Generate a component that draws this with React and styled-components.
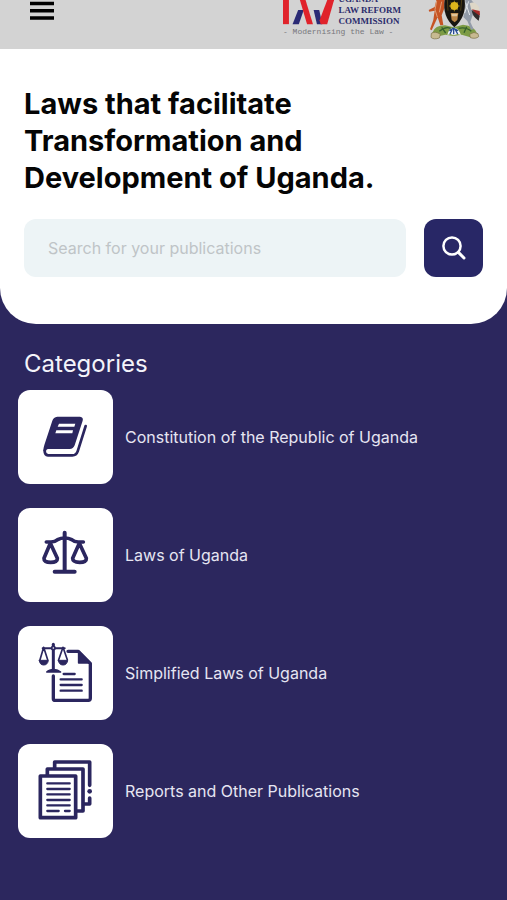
import React, { useState } from 'react'
import styled, { createGlobalStyle } from 'styled-components'

const GlobalStyle = createGlobalStyle`
    body {
        margin: 0;
        background: #2c275e;
        font-family: Inter, 'Liberation Sans', sans-serif;
    }
`

const Page = styled.div`
    min-height: 100vh;
    background: #2c275e;
`

const TopBar = styled.header`
    height: 49px;
    box-sizing: border-box;
    padding: 0px 27px 0px 30px;
    display: flex;
    align-items: flex-start;
    justify-content: space-between;
    overflow: hidden;
    background: #d3d3d3;
`

const MenuButton = styled.button`
    padding: 0;
    border: none;
    background: none;
    display: flex;
    cursor: pointer;
`

const Brands = styled.div`
    display: flex;
    align-items: flex-start;
    gap: 27px;
`

const Logo = styled.a`
    width: 118px;
    height: 36px;
    display: flex;
    flex-direction: column;
    justify-content: flex-end;
    color: #2b2c6c;
    text-decoration: none;
`

const LogoTop = styled.span`
    display: flex;
    align-items: flex-start;
    gap: 4px;
`

const LogoName = styled.span`
    font-family: 'Liberation Serif', serif;
    font-weight: bold;
    font-size: 9px;
    line-height: 11px;
    white-space: nowrap;
`

const Tagline = styled.span`
    font-family: 'Liberation Mono', monospace;
    font-size: 8px;
    line-height: 9px;
    color: #77777c;
    white-space: nowrap;
`

const SearchPanel = styled.section`
    padding: 36px 24px 47px 24px;
    background: #ffffff;
    border-radius: 0px 0px 36px 36px;
`

const Heading = styled.h1`
    margin: 0px 0px 23px 0px;
    max-width: 400px;
    font-weight: 700;
    font-size: 29px;
    line-height: 37px;
    color: #050505;
`

const SearchForm = styled.form`
    display: flex;
    gap: 18px;
`

const SearchInput = styled.input`
    flex: 1;
    min-width: 0;
    height: 58px;
    box-sizing: border-box;
    padding: 0px 24px;
    border: none;
    border-radius: 12px;
    background: #edf4f6;
    font-family: inherit;
    font-size: 16px;
    color: #222222;
    &::placeholder {
        color: #bfc4c7;
        opacity: 1;
    }
`

const SearchButton = styled.button`
    width: 59px;
    height: 58px;
    padding: 0;
    display: flex;
    align-items: center;
    justify-content: center;
    border: none;
    border-radius: 12px;
    background: #282766;
    cursor: pointer;
`

const Categories = styled.section`
    padding: 24px 18px 60px 18px;
`

const CategoriesTitle = styled.h2`
    margin: 0px 0px 10px 6px;
    font-weight: 400;
    font-size: 24px;
    line-height: 32px;
    color: #f4f4fa;
`

const CategoryList = styled.ul`
    margin: 0;
    padding: 0;
    list-style: none;
    display: flex;
    flex-direction: column;
    gap: 24px;
`

const CategoryLink = styled.a`
    display: flex;
    align-items: center;
    gap: 12px;
    color: #e6e5f2;
    font-size: 16px;
    line-height: 24px;
    text-decoration: none;
`

const IconCard = styled.span`
    flex: none;
    width: 95px;
    height: 94px;
    display: flex;
    border-radius: 12px;
    background: #ffffff;
`

const ink = '#2b265f'

function MenuIcon() {
    return (
        <svg width="24" height="20" viewBox="0 0 24 20" aria-hidden="true">
            <path d="M0 3.5h24M0 10.7h24M0 18h24" stroke="#000" strokeWidth="3.4" />
        </svg>
    )
}

function LogoMark() {
    return (
        <svg width="52" height="31" viewBox="38 -18 156 93" aria-hidden="true">
            <path d="M38-18h18v91H38z" fill="#e0232b" />
            <path d="M84 30h17L86 73H67z" fill="#2a2a75" />
            <path d="M84-18h17l28 91h-18z" fill="#e0232b" />
            <path d="M131 30h17l9 43h-16z" fill="#2a2a75" />
            <path d="M179-18h19l-26 91h-20l-3-12z" fill="#e0232b" />
        </svg>
    )
}

function CoatOfArms() {
    return (
        <svg width="52" height="40" viewBox="38 0 156 120" aria-hidden="true">
            <path d="M51 98q8-22 38-22l26 6 28-8q35 4 42 26l-12 14-34-10-24 4-25-4-34 8z" fill="#7d9c45" />
            <path d="M72 94q18-16 34-9M130 85q22-5 38 9M79 82l12 17M154 80l-8 18" fill="none" stroke="#35612c" strokeWidth="4" />
            <path d="M96 105q5-22 19-22t22 22l-10-3-12 4-10-4z" fill="#eef1f7" />
            <path d="M104 102l6-13M115 103V87M127 102l-7-13M102 92l12-7 14 7" fill="none" stroke="#264b94" strokeWidth="4" />
            <path d="M48 100q12-8 27 3l-3 11q-17 6-25-2zM163 103q13-10 25-2l2 9q-9 8-25 3z" fill="#c7ba91" stroke="#796e43" strokeWidth="2" />
            <path d="M63 0h25l-2 28-7 18 5 29-9 1-8-24-9 19-9 20-5-3 10-28 4-28-16 3-2-5 18-9z" fill="#c65424" />
            <path d="M64 3l-5 26 7 22M79 5l-7 32" fill="none" stroke="#ecc2a2" strokeWidth="2" />
            <path d="M150 0h18l20 24 5 24-4 14-17-17-7 21 10 22-8 1-11-26-12-12 6-20z" fill="#929ba8" />
            <path d="M163 10q16-8 28 12l1 13-24-6z" fill="#ded7c7" />
            <path d="M170 28l23 5 1 13q-12 1-24-18z" fill="#a52c2b" />
            <path d="M169 30q2 20 21 32l3-15z" fill="#322c2c" />
            <path d="M151 8l12 37M160 4l-12 35" fill="none" stroke="#e3e7eb" strokeWidth="3" />
            <path d="M88 0h60q6 50-31 82Q80 49 88 0z" fill="#171510" />
            <path d="M96 0l2 32M139 0l-3 32" stroke="#66531b" strokeWidth="2" />
            <circle cx="117" cy="18" r="12" fill="#ddb51c" />
            <path d="M117 2v32M101 18h32M106 7l22 22M128 7l-22 22" stroke="#ddb51c" strokeWidth="2" />
            <path d="M106 39h23l-3 21-8 7-9-7z" fill="#ba8547" />
            <path d="M108 41h19l-2 8h-15z" fill="#e1c59a" />
        </svg>
    )
}

function SearchIcon() {
    return (
        <svg width="24" height="24" viewBox="0 0 24 24" fill="none" stroke="#fff" aria-hidden="true">
            <circle cx="10" cy="10" r="8.6" strokeWidth="2.5" />
            <path d="M16.4 16.4l5.6 5.6" strokeWidth="3" strokeLinecap="round" />
        </svg>
    )
}

function CardIcon({ children }) {
    return (
        <svg width="94" height="94" viewBox="0 0 282 282" fill="none" stroke={ink} strokeLinecap="round" strokeLinejoin="round" aria-hidden="true">
            {children}
        </svg>
    )
}

function BookIcon() {
    return (
        <CardIcon>
            <path d="M118 80h68q11 1 8 12l-24 74q-4 11-15 11H91q-8 0-9 9l-6-3q0-9 3-18l24-73q3-11 15-12z" fill={ink} stroke="none" />
            <path d="M203 108l-24 76q-4 12-16 12H90q-10-1-10-13l3-10" strokeWidth="8" />
            <path d="M123 101h49l-3 9h-50zM115 121h50l-2 9h-51z" fill="#fff" stroke="none" />
        </CardIcon>
    )
}

function ScaleIcon() {
    return (
        <CardIcon>
            <g strokeWidth="11">
                <path d="M140 74v117M110 191h60" strokeWidth="12" />
                <path d="M85 102h14q12 0 20-7 9-5 21-5t21 5q8 7 20 7h15" />
                <path d="M97 106l-19 45q-1 12 20 12t20-12zM184 106l-20 45q0 12 21 12t20-12z" />
            </g>
        </CardIcon>
    )
}

function ScaleDocumentIcon() {
    return (
        <CardIcon>
            <path d="M106 150v68q0 5 6 5h99q6 0 6-6v-104l-36-37h-31" strokeWidth="10" />
            <path d="M182 76v35h36z" fill={ink} strokeWidth="5" />
            <path d="M137 144h33M128 160h63M128 177h63M128 194h63" strokeWidth="7" />
            <path d="M106 55v78" strokeWidth="9" />
            <path d="M86 138q8-8 21-8t21 8z" fill={ink} strokeWidth="4" />
            <path d="M74 67h66" strokeWidth="6" />
            <circle cx="106" cy="66" r="5" fill="#fff" strokeWidth="5" />
            <path d="M77 64L66 101M77 64l12 37M135 64l-13 37M135 64l13 37" strokeWidth="5" />
            <path d="M64 103h27q-2 14-14 14t-13-14zM121 103h28q-2 14-14 14t-14-14z" fill={ink} strokeWidth="3" />
        </CardIcon>
    )
}

function ReportsIcon() {
    return (
        <CardIcon>
            <g strokeWidth="11" strokeLinejoin="round">
                <path d="M67 96h106v125H67z" />
                <path d="M88 93V75h107v126h-17" />
                <path d="M110 72V54h105v70M215 162v18h-18" />
            </g>
            <circle cx="215" cy="142" r="7" fill={ink} stroke="none" />
            <path d="M88 118h67M88 135h67M88 151h67M88 168h67M88 184h67M88 201h34M141 201h14" strokeWidth="7" />
        </CardIcon>
    )
}

const categories = [
    { name: 'Constitution of the Republic of Uganda', Icon: BookIcon },
    { name: 'Laws of Uganda', Icon: ScaleIcon },
    { name: 'Simplified Laws of Uganda', Icon: ScaleDocumentIcon },
    { name: 'Reports and Other Publications', Icon: ReportsIcon }
]

export default function App() {
    const [query, setQuery] = useState('')

    return (
        <Page>
            <GlobalStyle />
            <TopBar>
                <MenuButton type="button" aria-label="Menu">
                    <MenuIcon />
                </MenuButton>
                <Brands>
                    <Logo href="#home">
                        <LogoTop>
                            <LogoMark />
                            <LogoName>UGANDA<br />LAW REFORM<br />COMMISSION</LogoName>
                        </LogoTop>
                        <Tagline>- Modernising the Law -</Tagline>
                    </Logo>
                    <CoatOfArms />
                </Brands>
            </TopBar>
            <main>
                <SearchPanel>
                    <Heading>Laws that facilitate Transformation and Development of Uganda.</Heading>
                    <SearchForm role="search" onSubmit={(e) => e.preventDefault()}>
                        <SearchInput
                            type="text"
                            aria-label="Search for your publications"
                            placeholder="Search for your publications"
                            value={query}
                            onChange={(e) => setQuery(e.target.value)}
                        />
                        <SearchButton type="submit" aria-label="Search">
                            <SearchIcon />
                        </SearchButton>
                    </SearchForm>
                </SearchPanel>
                <Categories>
                    <CategoriesTitle>Categories</CategoriesTitle>
                    <CategoryList>
                        {categories.map(({ name, Icon }) => (
                            <li key={name}>
                                <CategoryLink href="#category">
                                    <IconCard><Icon /></IconCard>
                                    {name}
                                </CategoryLink>
                            </li>
                        ))}
                    </CategoryList>
                </Categories>
            </main>
        </Page>
    )
}
